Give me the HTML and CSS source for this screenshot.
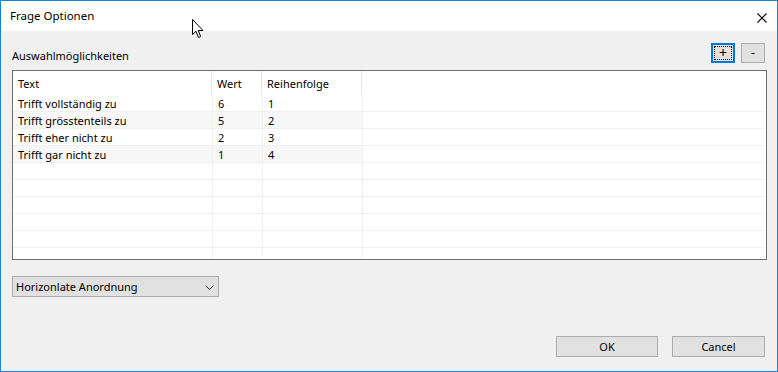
FILE: index.html
```
<!DOCTYPE html>
<html lang="de">
<head>
    <meta charset="UTF-8">
    <meta name="viewport" content="width=device-width, initial-scale=1.0">
    <title>Frage Optionen</title>
    <link rel="stylesheet" href="styles.css">
</head>
<body>
    <div class="dialog">
        <div class="titlebar">
            <span class="title">Frage Optionen</span>
            <svg class="close" width="10" height="10" viewBox="0 0 10 10">
                <path d="M0.5 0.5 L9.5 9.5 M9.5 0.5 L0.5 9.5" stroke="#000" stroke-width="1.1" fill="none"/>
            </svg>
        </div>

        <div class="content">
            <div class="choices-head">
                <span class="label">Auswahlmöglichkeiten</span>
                <div class="tools">
                    <button class="btn-small btn-focused"><span class="focus-rect">+</span></button>
                    <button class="btn-small">-</button>
                </div>
            </div>

            <div class="listview">
                <div class="lv-header">
                    <div class="hcell">Text</div>
                    <div class="hcell">Wert</div>
                    <div class="hcell">Reihenfolge</div>
                    <div class="hcell filler"></div>
                </div>
                <div class="lv-row">
                    <div class="cell">Trifft vollständig zu</div>
                    <div class="cell">6</div>
                    <div class="cell">1</div>
                    <div class="cell filler"></div>
                </div>
                <div class="lv-row alt">
                    <div class="cell">Trifft grösstenteils zu</div>
                    <div class="cell">5</div>
                    <div class="cell">2</div>
                    <div class="cell filler"></div>
                </div>
                <div class="lv-row">
                    <div class="cell">Trifft eher nicht zu</div>
                    <div class="cell">2</div>
                    <div class="cell">3</div>
                    <div class="cell filler"></div>
                </div>
                <div class="lv-row alt">
                    <div class="cell">Trifft gar nicht zu</div>
                    <div class="cell">1</div>
                    <div class="cell">4</div>
                    <div class="cell filler"></div>
                </div>
                <div class="lv-row"><div class="cell"></div><div class="cell"></div><div class="cell"></div><div class="cell filler"></div></div>
                <div class="lv-row"><div class="cell"></div><div class="cell"></div><div class="cell"></div><div class="cell filler"></div></div>
                <div class="lv-row"><div class="cell"></div><div class="cell"></div><div class="cell"></div><div class="cell filler"></div></div>
                <div class="lv-row"><div class="cell"></div><div class="cell"></div><div class="cell"></div><div class="cell filler"></div></div>
                <div class="lv-row"><div class="cell"></div><div class="cell"></div><div class="cell"></div><div class="cell filler"></div></div>
                <div class="lv-row"><div class="cell"></div><div class="cell"></div><div class="cell"></div><div class="cell filler"></div></div>
            </div>

            <div class="combo">
                <span class="combo-text">Horizonlate Anordnung</span>
                <svg class="chevron" width="9" height="5" viewBox="0 0 9 5">
                    <path d="M0.5 0.5 L4.5 4.5 L8.5 0.5" stroke="#333" stroke-width="1" fill="none"/>
                </svg>
            </div>

            <div class="footer">
                <button class="btn btn-ok">OK</button>
                <button class="btn btn-cancel">Cancel</button>
            </div>
        </div>

        <!-- mouse pointer over the title bar -->
        <svg class="cursor" width="13" height="20" viewBox="0 0 13 20">
            <path d="M0.5 0.5 L0.5 15.5 L4 12.2 L6.5 18.5 L8.7 17.6 L6.3 11.5 L11 11.5 Z" fill="#fff" stroke="#000" stroke-width="1" stroke-linejoin="miter"/>
        </svg>
    </div>
</body>
</html>
```

FILE: styles.css
```
* {
    margin: 0;
    padding: 0;
    box-sizing: border-box;
}

body {
    font-family: 'Noto Sans', 'Open Sans', sans-serif;
    font-size: 11px;
    color: #000;
    background: #fff;
}

.dialog {
    position: relative;
    width: 778px;
    height: 372px;
    border: 1px solid #1883d7;
    background: #f0f0f0;
    display: flex;
    flex-direction: column;
}

/* Title bar */
.titlebar {
    height: 30px;
    background: #fff;
    display: flex;
    align-items: center;
    justify-content: space-between;
    padding: 0 10px 0 9px;
}

.title {
    font-size: 11.5px;
    line-height: 16px;
    padding-bottom: 1px;
}

.close {
    display: block;
    margin-top: 3px;
}

/* Content */
.content {
    flex: 1;
    display: flex;
    flex-direction: column;
    padding: 12px 11px 0 11px;
}

.choices-head {
    display: flex;
    justify-content: space-between;
    align-items: flex-start;
    height: 20px;
}

.label {
    line-height: 16px;
    padding-top: 5px;
}

.tools {
    display: flex;
    gap: 6px;
    margin-right: 1px;
}

.btn-small {
    width: 24px;
    height: 20px;
    background: #e1e1e1;
    border: 1px solid #adadad;
    font-family: 'Noto Sans', sans-serif;
    font-size: 12px;
    line-height: 16px;
    color: #000;
    display: flex;
    align-items: center;
    justify-content: center;
}

.btn-focused {
    border: 2px solid #0078d7;
    padding: 1px;
}

.focus-rect {
    display: flex;
    align-items: center;
    justify-content: center;
    width: 100%;
    height: 100%;
    border: 1px dotted #000;
    font-size: 14px;
}

/* List view */
.listview {
    margin-top: 7px;
    height: 190px;
    width: 755px;
    border: 1px solid #6e6e6e;
    background: #fff;
    overflow: hidden;
}

.lv-header {
    display: grid;
    grid-template-columns: 199px 50px 100px 1fr;
    height: 24px;
}

.hcell {
    border-right: 1px solid #e5e5e5;
    padding: 1px 5px 0;
    line-height: 23px;
}

.lv-row {
    display: grid;
    grid-template-columns: 200px 50px 100px 1fr;
    height: 17px;
    border-bottom: 1px solid #f0f0f0;
}

.cell {
    border-right: 1px solid #f0f0f0;
    padding: 1px 5px 0;
    line-height: 15px;
    white-space: nowrap;
}

.hcell.filler,
.cell.filler {
    border-right: none;
}

.lv-row.alt .cell {
    background: #f7f7f7;
}

.lv-row.alt .cell.filler {
    background: #fff;
}

/* Combo box */
.combo {
    margin-top: 16px;
    width: 207px;
    height: 21px;
    background: #e1e1e1;
    border: 1px solid #adadad;
    display: flex;
    align-items: center;
    justify-content: space-between;
    padding: 0 4px 0 3px;
}

.combo-text {
    line-height: 16px;
    padding-top: 1px;
}

.chevron {
    display: block;
    margin-top: 1px;
}

/* Footer buttons */
.footer {
    margin-top: 39px;
    display: flex;
    justify-content: flex-end;
    gap: 14px;
    padding-right: 1px;
}

.btn {
    height: 21px;
    background: #e1e1e1;
    border: 1px solid #adadad;
    font-family: 'Noto Sans', sans-serif;
    font-size: 11px;
    color: #000;
}

.btn-ok {
    width: 102px;
}

.btn-cancel {
    width: 93px;
}

.cursor {
    position: absolute;
    left: 191px;
    top: 18px;
}
```
